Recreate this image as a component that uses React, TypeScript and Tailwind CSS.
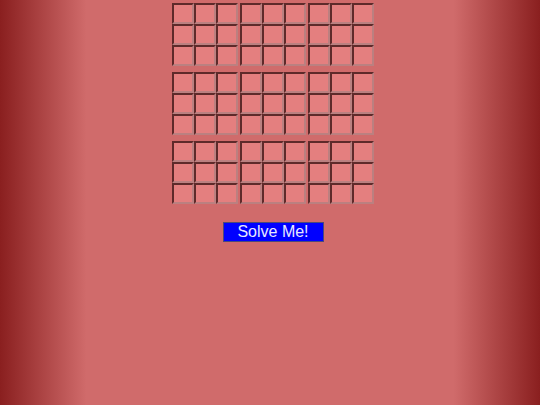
const blocks = [0, 1, 2];

function Cell() {
  return (
    <input
      type="text"
      maxLength={1}
      className="block w-[22px] h-[21px] bg-[#e47f7f] border-2 border-t-[#5e2a2a] border-l-[#5e2a2a] border-r-[#bb8080] border-b-[#bb8080] text-center text-sm outline-none"
    />
  );
}

function Block() {
  return (
    <div className="grid grid-cols-3">
      {Array.from({ length: 9 }).map((_, i) => (
        <Cell key={i} />
      ))}
    </div>
  );
}

export default function App() {
  return (
    <div
      className="w-[540px] h-[405px] bg-[linear-gradient(to_right,#8a1f1f,#d06b6b_16%,#d06b6b_84%,#8a1f1f)] flex flex-col items-center pt-[3px] pl-[6px]"
      style={{ fontFamily: '"Liberation Sans", Arial, sans-serif' }}
    >
      <div className="flex flex-col gap-[6px]">
        {blocks.map((r) => (
          <div key={r} className="flex gap-[2px]">
            {blocks.map((c) => (
              <Block key={c} />
            ))}
          </div>
        ))}
      </div>
      <button className="mt-[18px] w-[101px] h-[20px] bg-[#0000ff] border border-[#4a4a7a] text-[#e8e8ff] text-[16px] leading-none">
        Solve Me!
      </button>
    </div>
  );
}
